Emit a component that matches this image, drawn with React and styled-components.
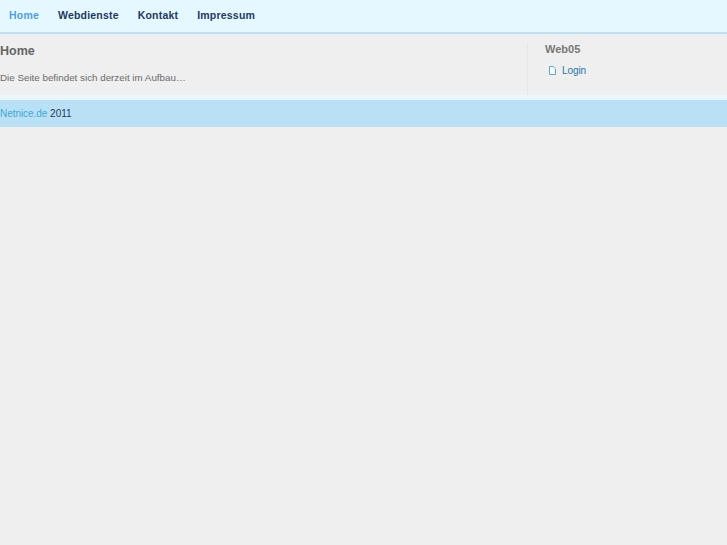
import React from 'react'
import styled, { createGlobalStyle } from 'styled-components'

const Global = createGlobalStyle`
  html, body { margin: 0; padding: 0; background: #efefef; }
  body { font-family: "Liberation Sans", Arial, sans-serif; font-size: 10px; color: #666; }
`

const Nav = styled.nav`
  display: flex;
  align-items: center;
  box-sizing: border-box;
  height: 34px;
  padding: 0 0 2px 9px;
  gap: 19px;
  background: #e5f7ff;
  border-bottom: 2px solid #bae0f5;
`

const NavLink = styled.a`
  font-size: 10.5px;
  font-weight: bold;
  letter-spacing: 0.2px;
  color: ${p => (p.$active ? '#4c9eea' : '#1b3a63')};
`

const Strip = styled.div`
  display: flex;
  height: 66px;
  background: linear-gradient(#efefef 61px, #eaf8fd 61px);
`

const Main = styled.main`
  width: 527px;
  height: 52px;
  margin-top: 9px;
  border-right: 1px solid #e3e7ea;
`

const Title = styled.h1`
  margin: 0;
  font-size: 12.5px;
  line-height: 16px;
  color: #666;
`

const Text = styled.p`
  margin: 13px 0 0;
  font-size: 9.8px;
  line-height: 12px;
  color: #6b6b6b;
`

const Side = styled.aside`
  padding: 8px 0 0 17px;
`

const SideTitle = styled.h2`
  margin: 0;
  font-size: 11px;
  line-height: 14px;
  color: #777;
`

const LoginRow = styled.a`
  display: flex;
  align-items: center;
  gap: 6px;
  margin: 9px 0 0 4px;
  font-size: 10px;
  line-height: 11px;
  letter-spacing: -0.1px;
  color: #1f78ac;
`

const Footer = styled.footer`
  height: 27px;
  line-height: 27px;
  background: #bae0f5;
  font-size: 10px;
  color: #1b3a63;
`

const FooterLink = styled.a`
  color: #3aa9d4;
  letter-spacing: -0.05px;
`

const PageIcon = () => (
  <svg width="7" height="9" viewBox="0 0 7 9" fill="#f5fbfe" stroke="#5fa5d0" strokeWidth="1">
    <path d="M.5.5h3.700L6.500 2.800V8.500H.5z" />
  </svg>
)

export default function App() {
  return (
    <>
      <Global />
      <Nav>
        <NavLink $active>Home</NavLink>
        <NavLink>Webdienste</NavLink>
        <NavLink>Kontakt</NavLink>
        <NavLink>Impressum</NavLink>
      </Nav>
      <Strip>
        <Main>
          <Title>Home</Title>
          <Text>Die Seite befindet sich derzeit im Aufbau…</Text>
        </Main>
        <Side>
          <SideTitle>Web05</SideTitle>
          <LoginRow><PageIcon />Login</LoginRow>
        </Side>
      </Strip>
      <Footer><FooterLink>Netnice.de</FooterLink> 2011</Footer>
    </>
  )
}
